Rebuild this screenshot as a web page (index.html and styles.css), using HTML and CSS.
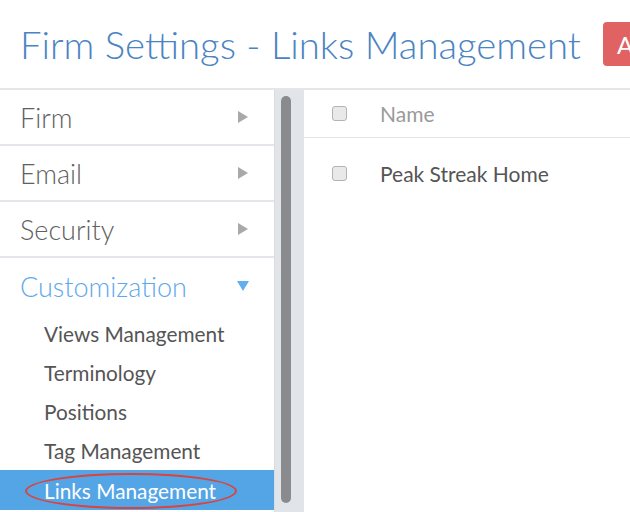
FILE: index.html
```html
<!DOCTYPE html>
<html>
<head>
<meta charset="utf-8">
<link rel="stylesheet" href="styles.css">
</head>
<body>
<div class="page">
  <header class="header">
    <h1 class="title">Firm Settings - Links Management</h1>
    <button class="add-btn">Add</button>
  </header>
  <div class="main">
    <nav class="sidebar">
      <div class="section">
        <span>Firm</span>
        <svg class="arrow" width="10" height="12" viewBox="0 0 10 12"><path d="M0 0 L10 6 L0 12 Z" fill="#a9a9a9"/></svg>
      </div>
      <div class="section">
        <span>Email</span>
        <svg class="arrow" width="10" height="12" viewBox="0 0 10 12"><path d="M0 0 L10 6 L0 12 Z" fill="#a9a9a9"/></svg>
      </div>
      <div class="section">
        <span>Security</span>
        <svg class="arrow" width="10" height="12" viewBox="0 0 10 12"><path d="M0 0 L10 6 L0 12 Z" fill="#a9a9a9"/></svg>
      </div>
      <div class="section section-open">
        <span>Customization</span>
        <svg class="arrow arrow-down" width="12" height="10" viewBox="0 0 12 10"><path d="M0 0 L12 0 L6 10 Z" fill="#63aef0"/></svg>
      </div>
      <ul class="sublist">
        <li class="subitem">Views Management</li>
        <li class="subitem">Terminology</li>
        <li class="subitem">Positions</li>
        <li class="subitem">Tag Management</li>
        <li class="subitem active">Links Management<span class="ring"></span></li>
      </ul>
    </nav>
    <div class="gutter"><div class="thumb"></div></div>
    <section class="content">
      <div class="row head-row">
        <span class="checkbox"></span>
        <span class="col-name">Name</span>
      </div>
      <div class="row data-row">
        <span class="checkbox"></span>
        <span class="cell">Peak Streak Home</span>
      </div>
    </section>
  </div>
</div>
</body>
</html>
```
FILE: styles.css
```css
* { box-sizing: border-box; }
html, body { margin: 0; padding: 0; background: #fff; }
body { font-family: Lato, "Open Sans", sans-serif; overflow: hidden; width: 630px; height: 512px; }
.page { width: 630px; height: 512px; overflow: hidden; }

.header {
  height: 88px;
  display: flex;
  align-items: center;
  padding-left: 20px;
  white-space: nowrap;
}
.title {
  margin: 0;
  font-size: 38.3px;
  font-weight: 300;
  color: #4a84c2;
}
.add-btn {
  margin-left: 22px;
  height: 44px;
  padding: 0 14px;
  border: none;
  border-radius: 4px;
  background: #e06262;
  color: #fff;
  font-family: Lato, sans-serif;
  font-size: 24px;
  flex-shrink: 0;
}

.main {
  display: flex;
  border-top: 2px solid #e6e6e6;
  height: 424px;
}
.sidebar {
  width: 275px;
  flex-shrink: 0;
  border-right: 1px solid #d8dbdf;
}
.section {
  height: 56px;
  border-bottom: 2px solid #e3e6ea;
  display: flex;
  align-items: center;
  justify-content: space-between;
  padding: 0 26px 0 20px;
  font-size: 27px;
  font-weight: 300;
  color: #606060;
}
.section-open {
  border-bottom: none;
  color: #5ea8ec;
  padding-right: 25px;
}
.arrow { display: block; }
.sublist { list-style: none; margin: 0; padding: 0; }
.subitem {
  position: relative;
  height: 39px;
  display: flex;
  align-items: center;
  padding-left: 44px;
  font-size: 20.8px;
  color: #555;
}
.subitem.active {
  background: #54a5e6;
  color: #fff;
  height: 40px;
}
.ring {
  position: absolute;
  left: 25px;
  top: 3px;
  width: 212px;
  height: 36px;
  border: 2.5px solid #d9443f;
  border-radius: 50%;
}

.gutter {
  width: 29px;
  flex-shrink: 0;
  background: #e1e5ea;
  padding: 6px 0 0 6px;
}
.thumb {
  width: 10px;
  height: 407px;
  background: #898b8e;
  border-radius: 5px;
}

.content { flex: 1; }
.row {
  display: flex;
  align-items: center;
  padding-left: 28px;
}
.head-row {
  height: 48px;
  border-bottom: 1px solid #e5e5e5;
}
.data-row { height: 70px; }
.checkbox {
  width: 15px;
  height: 15px;
  border: 1px solid #b3b3b3;
  border-radius: 3px;
  background: #e9e9e9;
  margin-right: 33px;
  flex-shrink: 0;
}
.col-name { font-size: 21px; color: #9a9a9a; }
.cell { font-size: 21px; color: #555; }
```
